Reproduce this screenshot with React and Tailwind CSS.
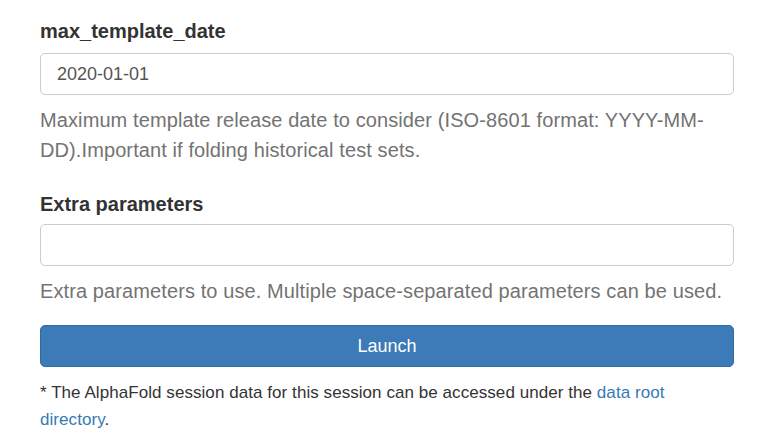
import React from "react";

export default function App() {
  return (
    <div className="w-[774px] h-[442px] bg-white overflow-hidden" style={{ fontFamily: '"Liberation Sans", Arial, sans-serif' }}>
      <div className="px-[40px] pt-[18px] w-full">
        <div className="text-[20px] leading-[26px] font-bold text-[#333333]">max_template_date</div>
        <div className="mt-[9px] h-[42px] border border-[#cccccc] rounded-[5px] flex items-center px-[16px] text-[18px] text-[#555555]">
          2020-01-01
        </div>
        <div className="mt-[10px] text-[20px] leading-[30px] text-[#737373] tracking-[0.1px]">
          Maximum template release date to consider (ISO-8601 format: YYYY-MM-DD).Important if folding historical test sets.
        </div>
        <div className="mt-[26px] text-[20px] leading-[26px] font-bold text-[#333333]">Extra parameters</div>
        <div className="mt-[7px] h-[42px] border border-[#cccccc] rounded-[5px]"></div>
        <div className="mt-[10px] text-[20px] leading-[30px] text-[#737373] tracking-[0.1px]">
          Extra parameters to use. Multiple space-separated parameters can be used.
        </div>
        <button className="mt-[19px] w-full h-[42px] bg-[#3d7ab8] border border-[#2e6da4] rounded-[5px] text-white text-[18px]">
          Launch
        </button>
        <div className="mt-[12px] text-[17px] leading-[27px] text-[#333333] tracking-[0.06px]">
          * The AlphaFold session data for this session can be accessed under the{" "}
          <span className="text-[#337ab7]">data root directory</span>.
        </div>
      </div>
    </div>
  );
}
